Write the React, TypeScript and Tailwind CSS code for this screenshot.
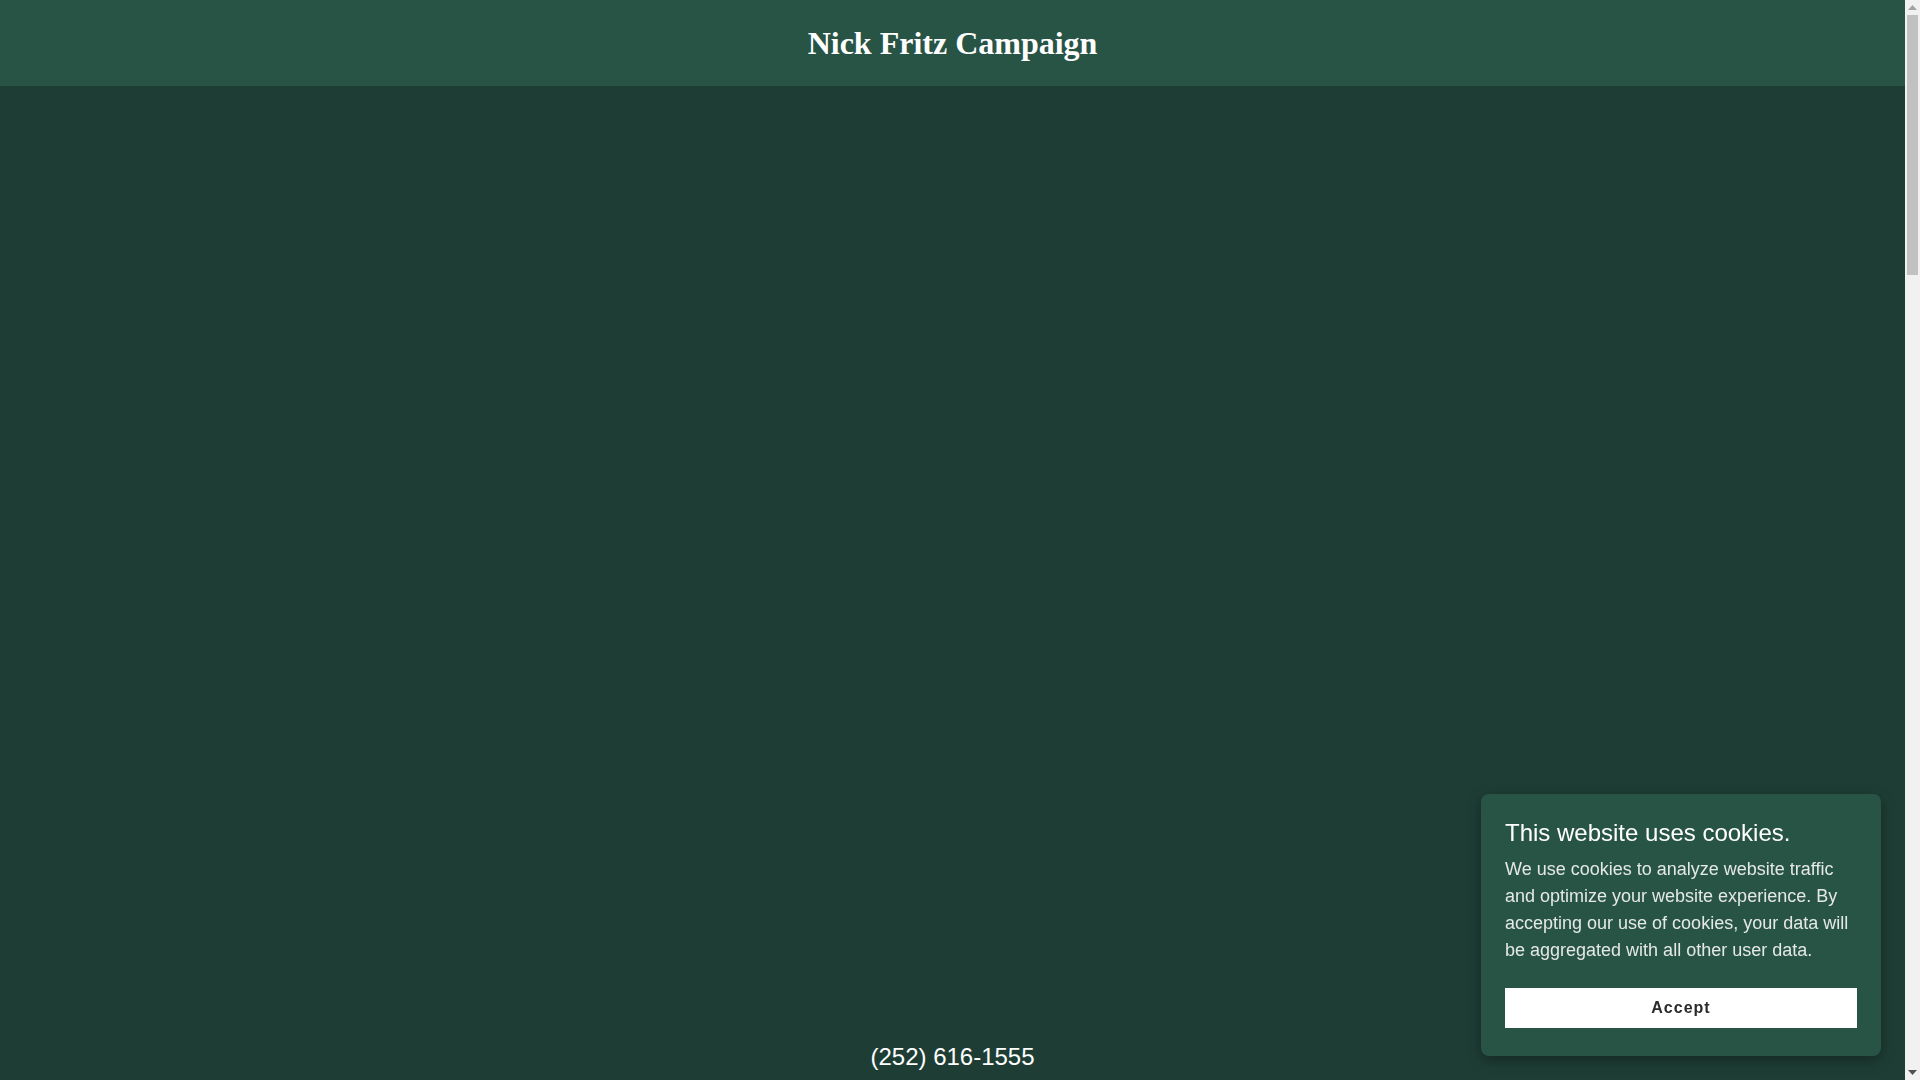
import React from 'react';

const serif = { fontFamily: '"Liberation Serif", "Times New Roman", serif' };

function Header() {
  return (
    <header className="flex h-[86px] shrink-0 items-center justify-center bg-[#285446]">
      <h1 className="text-[32px] font-bold leading-[40px] text-white" style={serif}>
        Nick Fritz Campaign
      </h1>
    </header>
  );
}

function CookieBanner() {
  return (
    <div className="fixed bottom-6 right-[39px] w-[400px] rounded-lg bg-[#285446] px-6 pt-6 pb-7 shadow-[0_4px_14px_rgba(0,0,0,0.35)]">
      <h2 className="text-[24px] leading-[30px] text-white">This website uses cookies.</h2>
      <p className="mt-2 text-[18px] leading-[27px] text-[#e4e8e6]">
        We use cookies to analyze website traffic and optimize your website experience. By accepting our use of cookies,
        your data will be aggregated with all other user data.
      </p>
      <button className="mt-6 flex h-10 w-full items-center justify-center bg-white text-[16px] font-bold tracking-[1px] text-[#2b2b2b]">
        Accept
      </button>
    </div>
  );
}

// the browser's scrollbar as seen in the shot
function ScrollBar() {
  return (
    <div className="flex w-[15px] shrink-0 flex-col items-center bg-[#f1f1f1]">
      <div className="flex h-[15px] w-full items-center justify-center">
        <svg width="9" height="5" viewBox="0 0 9 5">
          <path d="M0 5 L4.5 0 L9 5 Z" fill="#a3a3a3" />
        </svg>
      </div>
      <div className="h-[260px] w-[11px] bg-[#c1c1c1]" />
      <div className="flex-1" />
      <div className="flex h-[15px] w-full items-center justify-center">
        <svg width="9" height="5" viewBox="0 0 9 5">
          <path d="M0 0 L9 0 L4.5 5 Z" fill="#505050" />
        </svg>
      </div>
    </div>
  );
}

export default function App() {
  return (
    <div className="flex h-screen overflow-hidden" style={{ fontFamily: '"Liberation Sans", Arial, sans-serif' }}>
      <div className="flex min-w-0 flex-1 flex-col bg-[#1e3e35]">
        <Header />
        <main>
          {/* hero area, empty */}
          <section className="h-[954px]" />
          <p className="text-center text-[24px] leading-[33px] text-white">(252) 616-1555</p>
          <section className="h-[3300px]" />
        </main>
      </div>
      <ScrollBar />
      <CookieBanner />
    </div>
  );
}
